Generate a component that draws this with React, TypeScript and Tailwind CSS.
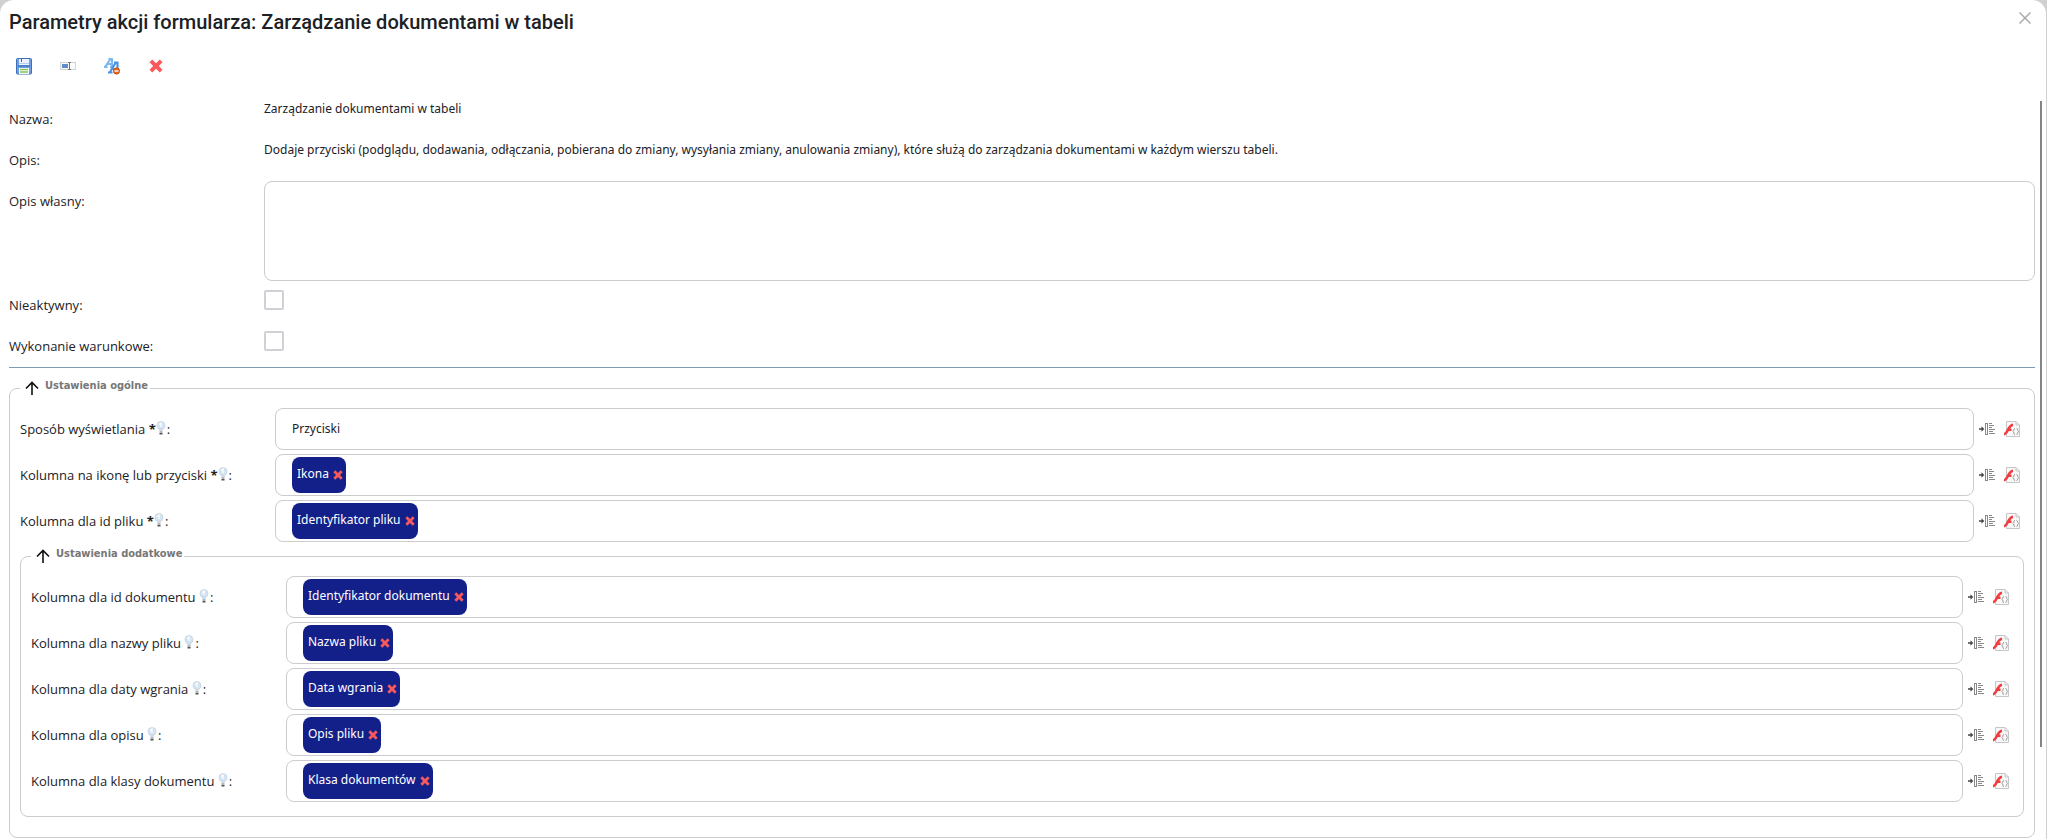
import type { ReactNode } from "react";

type TagFieldProps = {
  id: string;
  label: string;
  tag: string;
  required?: boolean;
};

const additionalFields: TagFieldProps[] = [
  { id: "document-id", label: "Kolumna dla id dokumentu", tag: "Identyfikator dokumentu" },
  { id: "file-name", label: "Kolumna dla nazwy pliku", tag: "Nazwa pliku" },
  { id: "upload-date", label: "Kolumna dla daty wgrania", tag: "Data wgrania" },
  { id: "description", label: "Kolumna dla opisu", tag: "Opis pliku" },
  { id: "document-class", label: "Kolumna dla klasy dokumentu", tag: "Klasa dokumentów" },
];

function SaveIcon() {
  return (
    <svg viewBox="0 0 16 18" className="h-[18px] w-4">
      <rect x="0.5" y="1.5" width="15" height="15.5" rx="1" fill="#6f9fe4" stroke="#3f6fb5" />
      <rect x="3" y="2" width="10" height="6" fill="#eaf2fd" />
      <path d="M3 6.5h10" stroke="#b7cdee" />
      <rect x="5" y="2" width="1" height="3" fill="#3c68a8" />
      <rect x="2" y="8" width="12" height="2" fill="#4e80cc" />
      <rect x="3" y="11" width="10" height="6" fill="#f6faf2" />
      <path d="M4 12.5h8M4 15h8" stroke="#86c45c" strokeWidth="1.5" />
    </svg>
  );
}

function RenameIcon() {
  return (
    <svg viewBox="0 0 16 16" className="size-4">
      <rect x="0.5" y="4.5" width="15" height="7" fill="#fafafa" stroke="#d4d4d4" />
      <rect x="2" y="6" width="6" height="4" fill="#5f8dcc" />
      <path d="M8 4.5h3M8 11.5h3M9.5 5v6" stroke="#777" fill="none" />
    </svg>
  );
}

function TranslateIcon() {
  return (
    <svg viewBox="0 0 16 18" className="h-[18px] w-4" fill="none">
      <path d="M1.5 9.5 6 2.5h2v7M3.5 7h4M0 9.8h3.5M6 9.8h4M4.5 2h4" stroke="#7bb8f0" strokeWidth="2.2" />
      <path d="M6 15 11.5 6h2v9M8 12h5M4 15.5h4.5M10 5.5h4.5" stroke="#4f93e0" strokeWidth="2.2" />
      <circle cx="12.5" cy="14" r="3.2" fill="#e8641b" stroke="#b9440c" strokeWidth="0.6" />
      <path d="M10.5 14h4" stroke="#fff" strokeWidth="1.4" />
    </svg>
  );
}

function CrossIcon({ className }: { className: string }) {
  return (
    <svg viewBox="0 0 14 14" className={className}>
      <path
        d="M3.2 0.5 7 4.2 10.8 0.5 13.5 3.2 9.8 7l3.7 3.8-2.7 2.7L7 9.8l-3.8 3.7-2.7-2.7L4.2 7 0.5 3.2Z"
        fill="#f9595b"
      />
    </svg>
  );
}

function BulbIcon() {
  return (
    <svg viewBox="0 0 10 14" className="mr-px inline-block h-3.5 w-2.5 align-[-1px]">
      <circle cx="5" cy="4.5" r="4" fill="#d3e4f4" stroke="#c9d3dc" strokeWidth="0.8" />
      <path d="M2.5 7.5h5L6.5 10h-3Z" fill="#cfdbe6" />
      <path d="M3.2 3.5 5 2v4" stroke="#fff" strokeWidth="1.2" fill="none" />
      <rect x="3.5" y="10" width="3" height="2" fill="#b5b5b5" />
      <rect x="3.5" y="12" width="3" height="1.5" fill="#555" />
    </svg>
  );
}

function InsertIcon() {
  return (
    <svg viewBox="0 0 16 12" className="h-3 w-4" fill="none">
      <path d="M0 6h4" stroke="#444" strokeWidth="1.5" />
      <path d="M2.5 3.2 5.3 6 2.5 8.8Z" fill="#444" />
      <rect x="6.5" y="0.5" width="2" height="11" stroke="#888" />
      <path d="M10 0.5h3M10 2.5h5M10 4.5h3M10 6.5h6M10 8.5h4M10 10.5h6" stroke="#888" />
    </svg>
  );
}

function ScriptIcon() {
  return (
    <svg viewBox="0 0 16 16" className="size-4" fill="none">
      <path d="M2.5 0.5H12L15.5 4v11.5h-13Z" fill="#f8f8f8" stroke="#c6c6c6" />
      <path d="M12 0.5V4h3.5" stroke="#c6c6c6" />
      <path d="M0 13.2C4 13 3.8 4.5 9 3.8M3 8.8h4.5" stroke="#f23c3f" strokeWidth="2.6" />
      <path d="M11 7.5c-2 0-.5 2.5-2 3 1.5.5 0 3 2 3M12.5 7.5c2 0 .5 2.5 2 3-1.5.5 0 3-2 3" stroke="#999" />
    </svg>
  );
}

function ArrowUpIcon() {
  return (
    <svg viewBox="0 0 14 14" className="size-3.5" fill="none">
      <path d="M7 14V1.5M1 7.5l6-6 6 6" stroke="#111" strokeWidth="1.6" />
    </svg>
  );
}

function FormRow({ id, label, children }: { id?: string; label: string; children: ReactNode }) {
  return (
    <div className="grid min-h-[41px] grid-cols-[255px_1fr] items-start">
      <label htmlFor={id} className="pt-[11px] font-['Open_Sans',sans-serif] text-[13px] leading-5">
        {label}
      </label>
      {children}
    </div>
  );
}

function FieldRow({ id, label, required, children }: { id: string; label: string; required?: boolean; children: ReactNode }) {
  return (
    <div className="mb-1 flex items-center">
      <label htmlFor={id} className="w-[255px] shrink-0 font-['Open_Sans',sans-serif] text-[13px] leading-5">
        {label} {required && <b>*</b>}
        <BulbIcon />:
      </label>
      {children}
      <div className="flex w-[50px] shrink-0 items-center gap-[9px] pl-[5px]">
        <button type="button" aria-label="Wstaw">
          <InsertIcon />
        </button>
        <button type="button" aria-label="Skrypt">
          <ScriptIcon />
        </button>
      </div>
    </div>
  );
}

function TagField({ id, label, tag, required }: TagFieldProps) {
  return (
    <FieldRow id={id} label={label} required={required}>
      <div className="flex h-[42px] min-w-0 flex-1 items-center rounded-lg border border-[#cbcccd] px-4 text-xs">
        <span className="flex h-9 shrink-0 items-center gap-1 rounded-lg bg-[#14208a] pr-[3px] pb-0.5 pl-[5px] text-white">
          {tag}
          <button type="button" aria-label={`Usuń ${tag}`} className="pt-0.5">
            <CrossIcon className="size-2.5" />
          </button>
        </span>
        <input id={id} type="text" className="min-w-0 flex-1 outline-none" />
      </div>
    </FieldRow>
  );
}

function Section({ title, className, children }: { title: string; className: string; children: ReactNode }) {
  return (
    <fieldset className={`rounded-lg border border-[#cbcccd] px-2.5 ${className}`}>
      <legend className="flex h-[18px] items-start gap-1.5 pr-0.5 pl-[5px]">
        <button type="button" aria-label={`Zwiń: ${title}`} className="pt-0.5">
          <ArrowUpIcon />
        </button>
        <span className="font-['DejaVu_Sans_Condensed','DejaVu_Sans',sans-serif] text-[11px] leading-3.5 font-bold text-[#777]">
          {title}
        </span>
      </legend>
      <div className="pt-[11px]">{children}</div>
    </fieldset>
  );
}

export default function App() {
  return (
    <div className="min-h-screen bg-[#d0d0d0] pr-px font-['Noto_Sans',sans-serif] text-[#1c2125]">
      <div className="min-h-screen rounded-t-[14px] bg-white">
        <header className="flex items-start justify-between pr-[15px] pl-[9px]">
          <h1 className="pt-2 font-['Roboto',sans-serif] text-xl leading-7 font-medium">
            Parametry akcji formularza: Zarządzanie dokumentami w tabeli
          </h1>
          <button type="button" aria-label="Zamknij" className="pt-3">
            <svg viewBox="0 0 12 12" className="size-3" fill="none">
              <path d="M0.5 0.5l11 11M11.5 0.5l-11 11" stroke="#aaa" strokeWidth="1.5" />
            </svg>
          </button>
        </header>
        <div className="flex h-[62px] items-center gap-7 pb-0.5 pl-4">
          <button type="button" aria-label="Zapisz">
            <SaveIcon />
          </button>
          <button type="button" aria-label="Zmień nazwę">
            <RenameIcon />
          </button>
          <button type="button" aria-label="Usuń tłumaczenie">
            <TranslateIcon />
          </button>
          <button type="button" aria-label="Usuń">
            <CrossIcon className="mx-px size-3.5" />
          </button>
        </div>
        <div className="flex">
          <main className="min-w-0 flex-1 pr-[5px] pl-[9px]">
            <FormRow label="Nazwa:">
              <p className="pt-px text-xs leading-5">Zarządzanie dokumentami w tabeli</p>
            </FormRow>
            <FormRow label="Opis:">
              <p className="pt-px text-xs leading-5">
                Dodaje przyciski (podglądu, dodawania, odłączania, pobierana do zmiany, wysyłania zmiany, anulowania
                zmiany), które służą do zarządzania dokumentami w każdym wierszu tabeli.
              </p>
            </FormRow>
            <FormRow id="own-description" label="Opis własny:">
              <textarea
                id="own-description"
                className="mt-px mb-[3px] block h-[100px] w-full resize-none rounded-lg border border-[#cbcccd] p-2 text-xs"
              />
            </FormRow>
            <FormRow id="inactive" label="Nieaktywny:">
              <input
                id="inactive"
                type="checkbox"
                className="mt-1.5 size-5 appearance-none rounded-xs border-2 border-[#d0d0d6] bg-white"
              />
            </FormRow>
            <FormRow id="conditional" label="Wykonanie warunkowe:">
              <input
                id="conditional"
                type="checkbox"
                className="mt-1.5 size-5 appearance-none rounded-xs border-2 border-[#d0d0d6] bg-white"
              />
            </FormRow>
            <hr className="mt-px border-[#7f9ab5]" />
            <Section title="Ustawienia ogólne" className="mt-[11px] pb-5">
              <FieldRow id="display-mode" label="Sposób wyświetlania" required>
                <select
                  id="display-mode"
                  className="h-[42px] min-w-0 flex-1 appearance-none rounded-lg border border-[#cbcccd] px-4 text-xs"
                >
                  <option>Przyciski</option>
                </select>
              </FieldRow>
              <TagField id="icon-column" label="Kolumna na ikonę lub przyciski" tag="Ikona" required />
              <TagField id="file-id" label="Kolumna dla id pliku" tag="Identyfikator pliku" required />
              <Section title="Ustawienia dodatkowe" className="mt-[5px] pb-2.5">
                {additionalFields.map((field) => (
                  <TagField key={field.id} {...field} />
                ))}
              </Section>
            </Section>
          </main>
          <div className="mt-[3px] mr-1 h-[646px] w-0.5 bg-[#858585]" />
        </div>
      </div>
    </div>
  );
}
